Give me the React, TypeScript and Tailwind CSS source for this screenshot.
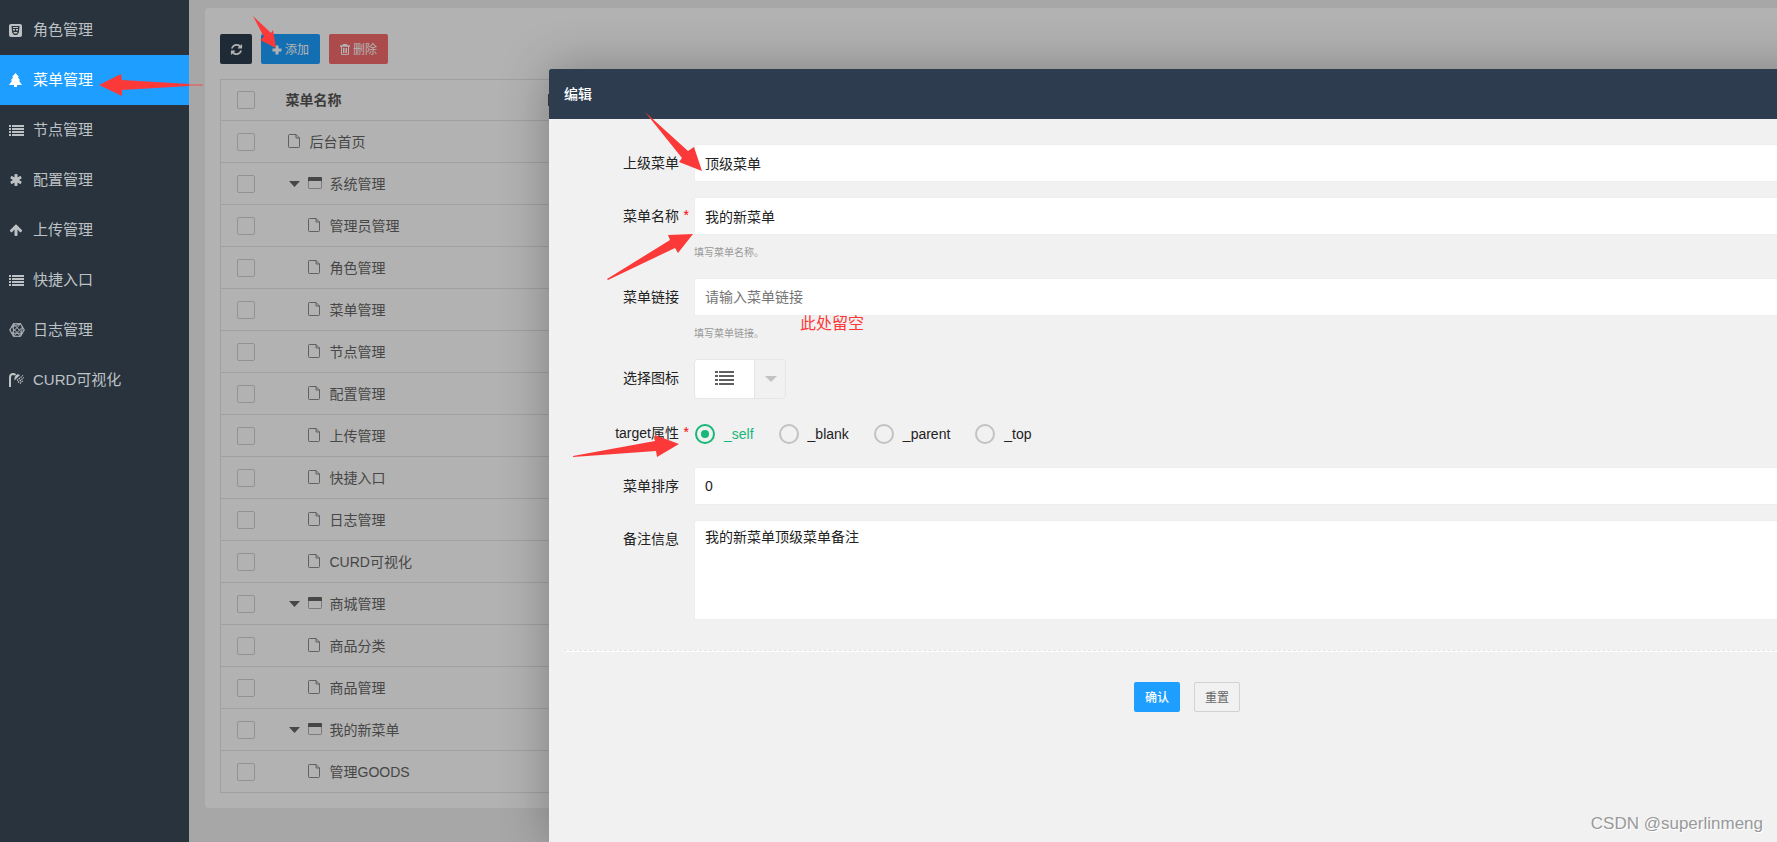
import type { ReactNode } from 'react';
import { FaConnectdevelop } from 'react-icons/fa';

function ListIcon() {
  return (
    <svg viewBox="0 0 15 11" className="h-[11px] w-[15px]" fill="currentColor" shapeRendering="crispEdges" aria-hidden="true">
      <path d="M0 0h2v2H0zM3 0h12v2H3zM0 3h2v2H0zM3 3h12v2H3zM0 6h2v2H0zM3 6h12v2H3zM0 9h2v2H0zM3 9h12v2H3z" />
    </svg>
  );
}

function BigListIcon() {
  return (
    <svg viewBox="0 0 19 14" className="h-[14px] w-[19px]" fill="currentColor" shapeRendering="crispEdges" aria-hidden="true">
      <path d="M0 0h3v2H0zM4 0h15v2H4zM0 4h3v2H0zM4 4h15v2H4zM0 8h3v2H0zM4 8h15v2H4zM0 12h3v2H0zM4 12h15v2H4z" />
    </svg>
  );
}

function RoleIcon() {
  return (
    <svg viewBox="0 0 13 13" className="size-[13px]" aria-hidden="true">
      <rect width="13" height="13" rx="2" fill="currentColor" />
      <path d="M2.500 2h8l-.7 6.500L8 11H5L3.200 8.500z" fill="#28333e" />
      <path d="M4 3h5v1H4zM4 5h2v1.500H4zM7 5h2v1.500H7zM4.500 8h4L8 9.500H5z" fill="currentColor" />
    </svg>
  );
}

function TreeIcon() {
  return (
    <svg viewBox="0 0 13 14" className="h-[14px] w-[13px]" fill="currentColor" aria-hidden="true">
      <path d="M6.500 0L10 4H8.700l2.600 3.500H9.800L13 12H8v2H5v-2H0l3.200-4.500H1.700L4.300 4H3z" />
    </svg>
  );
}

function AsteriskIcon() {
  return (
    <svg viewBox="0 0 1792 1792" className="size-[14px]" fill="currentColor" aria-hidden="true">
      <path d="M1546 1050q46 26 59.500 77.500t-12.500 97.500l-64 110q-26 46-77.500 59.500t-97.500-12.500l-266-153v307q0 52-38 90t-90 38h-128q-52 0-90-38t-38-90v-307l-266 153q-46 26-97.500 12.500t-77.500-59.500l-64-110q-26-46-12.500-97.500t59.500-77.500l266-154-266-154q-46-26-59.500-77.500t12.500-97.500l64-110q26-46 77.500-59.500t97.500 12.500l266 153v-307q0-52 38-90t90-38h128q52 0 90 38t38 90v307l266-153q46-26 97.500-12.500t77.500 59.500l64 110q26 46 12.500 97.500t-59.500 77.500l-266 154z" />
    </svg>
  );
}

function ArrowUpIcon() {
  return (
    <svg viewBox="0 0 1792 1792" className="size-[14px]" fill="currentColor" aria-hidden="true">
      <path d="M1675 971q0 51-37 90l-75 75q-38 38-91 38-54 0-90-38l-294-293v704q0 52-37.500 84.500t-90.500 32.500h-128q-53 0-90.500-32.500t-37.500-84.500v-704l-294 293q-36 38-90 38t-90-38l-75-75q-38-38-38-90 0-53 38-91l651-651q35-37 90-37 54 0 91 37l651 651q37 39 37 91z" />
    </svg>
  );
}

function ShowerIcon() {
  return (
    <svg viewBox="0 0 15 14" className="h-[14px] w-[15px]" aria-hidden="true">
      <path d="M1 14V4.500Q1 1 4 1q1.500 0 2.500 1" fill="none" stroke="currentColor" strokeWidth="2" />
      <path d="M5.500 7.500Q5 3 8 1.500q1.500-.5 3 .5z" fill="currentColor" />
      <path d="M8 7.500l6-5M9 9.500l6-5M11 10.500l3-3" fill="none" stroke="currentColor" strokeWidth="1.200" strokeDasharray="1.500 .8" />
    </svg>
  );
}

function RefreshIcon() {
  return (
    <svg viewBox="0 0 1792 1792" className="size-[13px]" fill="currentColor" aria-hidden="true">
      <path d="M1639 1056q0 5-1 7-64 268-268 434.500t-478 166.500q-146 0-282.500-55t-243.500-157l-129 129q-19 19-45 19t-45-19-19-45v-448q0-26 19-45t45-19h448q26 0 45 19t19 45-19 45l-137 137q71 66 161 102t187 36q134 0 250-65t186-179q11-17 53-117 8-23 30-23h192q13 0 22.500 9.500t9.500 22.500zm25-800v448q0 26-19 45t-45 19h-448q-26 0-45-19t-19-45 19-45l138-138q-148-137-349-137-134 0-250 65t-186 179q-11 17-53 117-8 23-30 23h-199q-13 0-22.500-9.500t-9.500-22.500v-7q65-268 270-434.500t480-166.500q146 0 284 55.500t245 156.500l130-129q19-19 45-19t45 19 19 45z" />
    </svg>
  );
}

function PlusIcon() {
  return (
    <svg viewBox="0 0 10 10" className="size-[10px]" fill="currentColor" aria-hidden="true">
      <path d="M3.500.5h3v3h3v3h-3v3h-3v-3h-3v-3h3z" />
    </svg>
  );
}

function TrashIcon() {
  return (
    <svg viewBox="0 0 10 11" className="h-[11px] w-[10px]" fill="none" stroke="currentColor" aria-hidden="true">
      <path d="M0 2h10M3.500 2V.5h3V2" strokeWidth="1.300" />
      <path d="M1.500 2v8.400h7V2M3.500 4v5M5 4v5M6.500 4v5" />
    </svg>
  );
}

function FileIcon() {
  return (
    <svg viewBox="0 0 12 14" className="h-[14px] w-[12px]" fill="none" stroke="currentColor" aria-hidden="true">
      <path d="M1.500.5h6.500l3.500 3.500v8.500a1 1 0 0 1-1 1h-9a1 1 0 0 1-1-1v-11a1 1 0 0 1 1-1z" strokeOpacity=".75" />
      <path d="M8 .5v3.500h3.500" strokeOpacity=".75" />
    </svg>
  );
}

function FolderIcon() {
  return (
    <svg viewBox="0 0 14 12" className="h-[12px] w-[14px]" aria-hidden="true">
      <rect x=".5" y=".5" width="13" height="11" rx="1" fill="none" stroke="currentColor" strokeOpacity=".5" />
      <path d="M0 1a1 1 0 0 1 1-1h12a1 1 0 0 1 1 1v3H0z" fill="currentColor" />
    </svg>
  );
}

type NavItem = { label: string; icon: ReactNode; active?: boolean };

const navItems: NavItem[] = [
  { label: '角色管理', icon: <RoleIcon /> },
  { label: '菜单管理', icon: <TreeIcon />, active: true },
  { label: '节点管理', icon: <ListIcon /> },
  { label: '配置管理', icon: <AsteriskIcon /> },
  { label: '上传管理', icon: <ArrowUpIcon /> },
  { label: '快捷入口', icon: <ListIcon /> },
  { label: '日志管理', icon: <FaConnectdevelop className="size-[16px] stroke-current [stroke-width:16px]" /> },
  { label: 'CURD可视化', icon: <ShowerIcon /> },
];

type MenuRow = { name: string; kind: 'root' | 'folder' | 'file' };

const rows: MenuRow[] = [
  { name: '后台首页', kind: 'root' },
  { name: '系统管理', kind: 'folder' },
  { name: '管理员管理', kind: 'file' },
  { name: '角色管理', kind: 'file' },
  { name: '菜单管理', kind: 'file' },
  { name: '节点管理', kind: 'file' },
  { name: '配置管理', kind: 'file' },
  { name: '上传管理', kind: 'file' },
  { name: '快捷入口', kind: 'file' },
  { name: '日志管理', kind: 'file' },
  { name: 'CURD可视化', kind: 'file' },
  { name: '商城管理', kind: 'folder' },
  { name: '商品分类', kind: 'file' },
  { name: '商品管理', kind: 'file' },
  { name: '我的新菜单', kind: 'folder' },
  { name: '管理GOODS', kind: 'file' },
];

const targets = ['_self', '_blank', '_parent', '_top'];

function Sidebar() {
  return (
    <nav className="w-[189px] shrink-0 bg-[#28333e] pt-[5px]">
      {navItems.map((item) => (
        <a
          key={item.label}
          href="#"
          className={
            item.active
              ? 'flex h-[50px] items-center bg-[#1e9fff] pl-[9px] text-[15px] text-white'
              : 'flex h-[50px] items-center pl-[9px] text-[15px] text-[#bfc2c5]'
          }
        >
          <span className="flex w-6 shrink-0 items-center">{item.icon}</span>
          {item.label}
        </a>
      ))}
    </nav>
  );
}

function TableCheckbox({ label }: { label: string }) {
  return (
    <input
      type="checkbox"
      aria-label={label}
      className="block size-[18px] appearance-none rounded-xs border border-[#d2d2d2]"
    />
  );
}

function MenuTable() {
  return (
    <table className="w-full border-collapse border border-[#e6e6e6] text-left text-[#666]">
      <thead>
        <tr className="h-[41px] border-b border-[#e6e6e6] font-bold text-[#555]">
          <th className="w-[50px] pl-4">
            <TableCheckbox label="全选" />
          </th>
          <th className="w-[262px] pl-[15px]">菜单名称</th>
          <th className="pl-[15px]">
            <span className="block h-3 w-px bg-[#555]" />
          </th>
        </tr>
      </thead>
      <tbody>
        {rows.map((row) => (
          <tr key={row.kind + row.name} className="h-[42px] border-b border-[#e6e6e6]">
            <td className="pl-4">
              <TableCheckbox label={row.name} />
            </td>
            <td className="pl-[17px]">
              <div className="flex items-center">
                {row.kind === 'folder' && (
                  <svg viewBox="0 0 11 6" className="mr-2 ml-px h-[6px] w-[11px]" fill="currentColor" aria-hidden="true">
                    <path d="M0 0h11L5.500 6z" />
                  </svg>
                )}
                {row.kind === 'file' && <span className="w-5" />}
                <span className="flex w-[22px] pb-[2px]">{row.kind === 'folder' ? <FolderIcon /> : <FileIcon />}</span>
                {row.name}
              </div>
            </td>
            <td />
          </tr>
        ))}
      </tbody>
    </table>
  );
}

function FormItem({ label, htmlFor, required, hint, children }: {
  label: string;
  htmlFor: string;
  required?: boolean;
  hint?: string;
  children: ReactNode;
}) {
  return (
    <div className="flex">
      <label htmlFor={htmlFor} className="relative w-[130px] shrink-0 pr-[15px] text-right leading-[38px]">
        {label}
        {required && <span className="absolute top-0 right-[5px] leading-[36px] text-[#f00]">*</span>}
      </label>
      <div className="min-w-0 flex-1">
        {children}
        {hint && <p className="mt-2 text-[10px] leading-5 text-[#999]">{hint}</p>}
      </div>
    </div>
  );
}

function EditDialog() {
  return (
    <section
      role="dialog"
      aria-label="编辑"
      className="absolute top-[69px] -right-12 bottom-0 left-[549px] rounded-t-xs bg-[#f1f1f1] shadow-[1px_1px_50px_rgba(0,0,0,0.3)]"
    >
      <h2 className="flex h-[50px] items-center rounded-t-xs bg-[#2d3d4f] px-[15px] font-medium text-white">编辑</h2>
      <form className="px-[15px] pt-[25px] text-[#222]">
        <div className="flex flex-col gap-[15px]">
          <FormItem label="上级菜单" htmlFor="parent">
            <input id="parent" defaultValue="顶级菜单" className="block h-[38px] w-full rounded-xs border border-[#eee] bg-white px-[10px]" />
          </FormItem>
          <FormItem label="菜单名称" htmlFor="name" required hint="填写菜单名称。">
            <input id="name" defaultValue="我的新菜单" className="block h-[38px] w-full rounded-xs border border-[#eee] bg-white px-[10px]" />
          </FormItem>
          <FormItem label="菜单链接" htmlFor="link" hint="填写菜单链接。">
            <input
              id="link"
              placeholder="请输入菜单链接"
              className="block h-[38px] w-full rounded-xs border border-[#eee] bg-white px-[10px] placeholder:text-[#757575]"
            />
          </FormItem>
          <FormItem label="选择图标" htmlFor="icon">
            <button id="icon" type="button" className="flex h-10 w-[92px] overflow-hidden rounded-sm border border-[#e6e6e6]">
              <span className="flex h-full w-[60px] items-center justify-center border-r border-[#e6e6e6] bg-white pb-[2px] text-[#5f5f5f]">
                <BigListIcon />
              </span>
              <span className="flex h-full flex-1 items-center justify-center pl-[2px] text-[#c2c2c2]">
                <svg viewBox="0 0 12 6" className="h-[6px] w-[12px]" fill="currentColor" aria-hidden="true">
                  <path d="M0 0h12L6 6z" />
                </svg>
              </span>
            </button>
          </FormItem>
          <FormItem label="target属性" htmlFor="target_self" required>
            <div className="flex h-10 items-center gap-[25px] pl-[1px] -mb-[2px]">
              {targets.map((target) => (
                <label key={target} className="flex items-center gap-[9px] has-checked:text-[#16b777]">
                  <input
                    id={'target' + target}
                    type="radio"
                    name="target"
                    defaultChecked={target === '_self'}
                    className="size-5 appearance-none rounded-full border-2 border-[#c2c2c2] p-1 checked:border-[#16b777] checked:bg-[#16b777] checked:bg-clip-content"
                  />
                  {target}
                </label>
              ))}
            </div>
          </FormItem>
          <FormItem label="菜单排序" htmlFor="sort">
            <input id="sort" defaultValue="0" className="block h-[38px] w-full rounded-xs border border-[#eee] bg-white px-[10px]" />
          </FormItem>
          <FormItem label="备注信息" htmlFor="remark">
            <textarea
              id="remark"
              defaultValue="我的新菜单顶级菜单备注"
              className="block h-[100px] w-full resize-none rounded-xs border border-[#eee] bg-white px-[10px] py-[6px] leading-5"
            />
          </FormItem>
        </div>
        <hr className="mt-[30px] h-[2px] border-t border-dashed border-[#e2e2e2] bg-white" />
        <div className="mt-[30px] flex justify-center gap-[14px] text-xs">
          <button type="submit" className="h-[30px] w-[46px] rounded-xs bg-[#1e9fff] pt-px font-medium text-white">确认</button>
          <button type="reset" className="h-[30px] w-[46px] rounded-xs border border-[#d2d2d2] pt-px text-[#666]">重置</button>
        </div>
      </form>
    </section>
  );
}

// hand-drawn arrows and note on top of the page
function Annotations() {
  return (
    <div className="pointer-events-none absolute inset-0 text-[#fc3939]">
      <svg width="720" height="480" className="absolute top-0 left-0" fill="currentColor" aria-hidden="true">
        <path d="M99 85l22-11 1 6 67 4v2l-67 4v6z" />
        <path d="M189 84h14v2h-14z" opacity=".4" />
        <path d="M253 16l18 17 2-3 3 18-16-8 4-3z" />
        <path d="M645 112l43 39 6-4 8 24-23-9 3-4z" />
        <path d="M607 279l63-39-2-5 25-1-15 19-3-5-67 32z" />
        <path d="M573 456l82-15v-6l24 9-22 13-1-6-83 6z" />
      </svg>
      <span className="absolute top-[312px] left-[800px] text-base leading-6">此处留空</span>
      <span className="absolute right-[14px] bottom-[6px] text-[17px] leading-6 text-[#999] [text-shadow:1px_1px_0_#fff]">
        CSDN @superlinmeng
      </span>
    </div>
  );
}

export default function App() {
  return (
    <div className="relative flex min-h-screen overflow-hidden bg-[#f0f0f0] font-['Liberation_Sans','Noto_Sans_CJK_SC',sans-serif] text-sm">
      <Sidebar />
      <main className="relative min-w-0 flex-1 pt-2 pl-4">
        <div className="rounded-l-sm bg-white px-[15px] pt-[26px] pb-[15px]">
          <div className="mb-[15px] flex gap-[9px] text-xs text-white">
            <button type="button" aria-label="刷新" className="flex h-[30px] w-8 items-center justify-center rounded-xs bg-[#2c3e50] pt-px">
              <RefreshIcon />
            </button>
            <button type="button" className="flex h-[30px] w-[59px] items-center justify-center gap-[3px] rounded-xs bg-[#1e9fff] pt-px">
              <PlusIcon />
              添加
            </button>
            <button type="button" className="flex h-[30px] w-[59px] items-center justify-center gap-[3px] rounded-xs bg-[#f56c6c] pt-px">
              <TrashIcon />
              删除
            </button>
          </div>
          <MenuTable />
        </div>
        <div className="absolute inset-0 bg-black/30" />
      </main>
      <EditDialog />
      <Annotations />
    </div>
  );
}
